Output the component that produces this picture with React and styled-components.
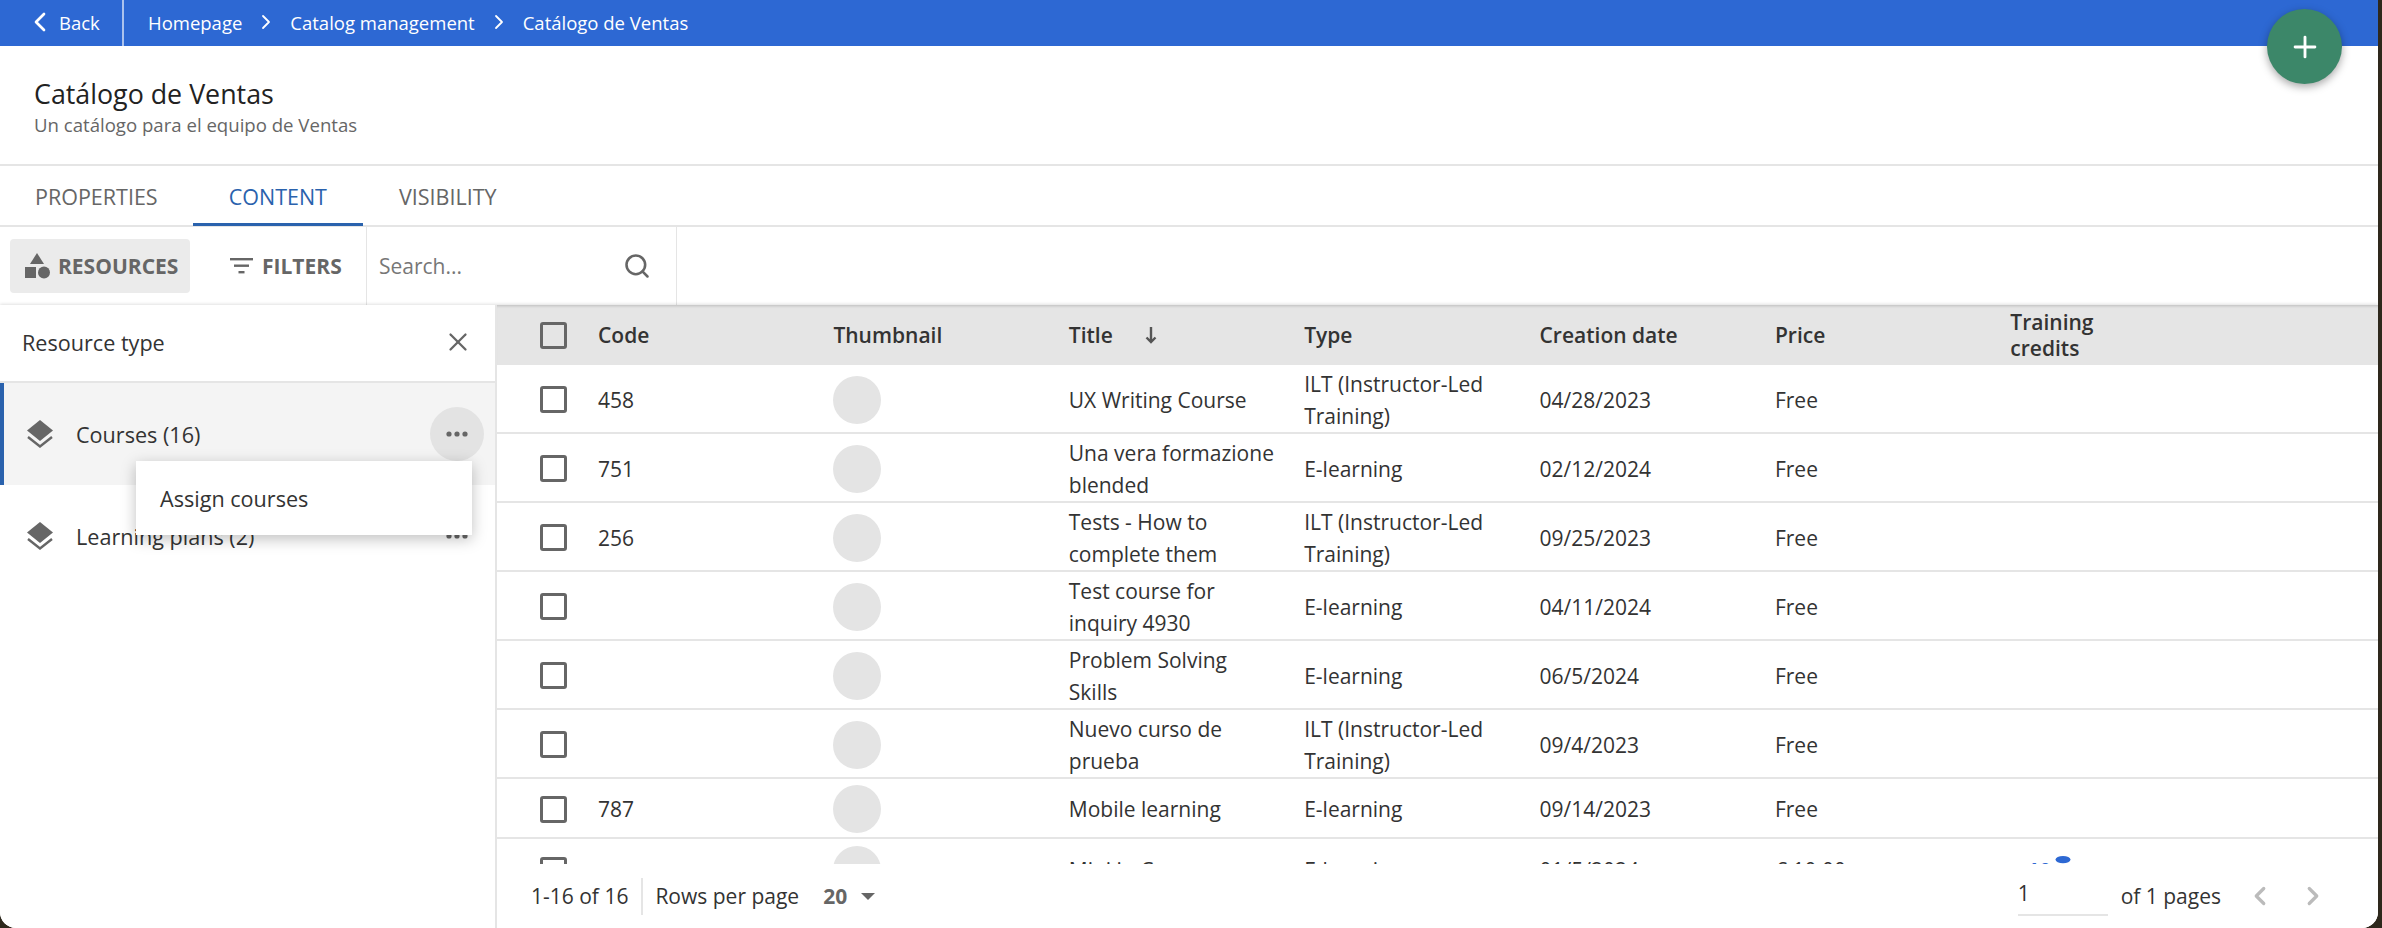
import React from "react";
import styled, { createGlobalStyle } from "styled-components";
import { ChevronLeft, ChevronRight, Search, X, Plus } from "lucide-react";

const Global = createGlobalStyle`
  html, body { margin: 0; padding: 0; height: 100%; background: #2e281c; overflow: hidden; }
  #root { height: 928px; }
  * { box-sizing: border-box; }
`;

const Page = styled.div`
  position: relative;
  width: 2378px;
  height: 928px;
  background: #fff;
  border-radius: 0 0 16px 16px;
  overflow: hidden;
  display: flex;
  flex-direction: column;
  font-family: "Open Sans", "Noto Sans", sans-serif;
  font-size: 21px;
  color: #333;
`;

const TopBar = styled.header`
  flex: none;
  height: 46px;
  background: #2d68d3;
  color: #fff;
  display: flex;
  align-items: center;
  font-size: 18.5px;
`;

const BackLink = styled.div`
  width: 124px;
  height: 100%;
  padding: 0 0 2px 24px;
  display: flex;
  align-items: center;
  gap: 3px;
  border-right: 2px solid rgba(255, 255, 255, 0.6);
`;

const Crumbs = styled.nav`
  display: flex;
  align-items: center;
  padding: 0 0 2px 24px;
`;

const CrumbSep = styled.span`
  width: 48px;
  display: flex;
  justify-content: center;
`;

const Fab = styled.button`
  position: absolute;
  left: 2267px;
  top: 9px;
  width: 75px;
  height: 75px;
  padding: 0;
  border: 0;
  border-radius: 50%;
  background: #3c8769;
  color: #fff;
  display: flex;
  align-items: center;
  justify-content: center;
  box-shadow: 0 3px 8px rgba(0, 0, 0, 0.35);
`;

const TitleBlock = styled.section`
  flex: none;
  height: 120px;
  padding: 31px 0 0 34px;
  border-bottom: 2px solid #e5e5e5;
`;

const PageTitle = styled.h1`
  margin: 0;
  font-size: 26.8px;
  line-height: 34px;
  font-weight: 500;
  color: #222;
`;

const Subtitle = styled.p`
  margin: 0;
  font-size: 18.6px;
  line-height: 27px;
  color: #666;
`;

const Tabs = styled.div`
  flex: none;
  height: 61px;
  display: flex;
  border-bottom: 2px solid #e5e5e5;
`;

const Tab = styled.div`
  height: 60px;
  padding: 3px ${(p) => p.$pad}px 0;
  display: flex;
  align-items: center;
  font-size: 21.5px;
  color: ${(p) => (p.$active ? "#2a62ad" : "#666")};
  border-bottom: 3px solid ${(p) => (p.$active ? "#2a62ad" : "transparent")};
`;

const Toolbar = styled.div`
  flex: none;
  height: 78px;
  display: flex;
  align-items: center;
`;

const ToolButton = styled.div`
  height: 54px;
  margin-left: ${(p) => p.$ml}px;
  width: ${(p) => p.$w}px;
  padding-left: ${(p) => p.$pl}px;
  display: flex;
  align-items: center;
  gap: ${(p) => p.$gap}px;
  border-radius: 4px;
  background: ${(p) => (p.$active ? "#ebebeb" : "transparent")};
  color: #666;
  font-weight: 700;
  font-size: 21px;
`;

const SearchBox = styled.div`
  height: 100%;
  width: 311px;
  margin-left: 12px;
  padding: 0 25px 0 12px;
  display: flex;
  align-items: center;
  justify-content: space-between;
  border-left: 1px solid #e5e5e5;
  border-right: 1px solid #e5e5e5;
  color: #777;
`;

const Body = styled.div`
  flex: 1;
  min-height: 0;
  display: flex;
  box-shadow: 0 -1px 3px rgba(0, 0, 0, 0.12);
`;

const Sidebar = styled.aside`
  flex: none;
  width: 497px;
  border-right: 2px solid #e5e5e5;
  position: relative;
  z-index: 2;
  background: #fff;
  font-size: 21.6px;
`;

const SideHead = styled.div`
  height: 78px;
  padding: 0 22px 2px;
  display: flex;
  align-items: center;
  justify-content: space-between;
  border-bottom: 2px solid #e5e5e5;
`;

const SideRow = styled.div`
  height: 102px;
  display: flex;
  align-items: center;
  padding-left: ${(p) => (p.$active ? 23 : 27)}px;
  padding-right: 11px;
  gap: 23px;
  background: ${(p) => (p.$active ? "#f4f4f4" : "transparent")};
  border-left: ${(p) => (p.$active ? "4px solid #2a62ad" : "0")};
`;

const RowLabel = styled.span`
  flex: 1;
`;

const DotsButton = styled.span`
  width: 54px;
  height: 54px;
  border-radius: 50%;
  display: flex;
  align-items: center;
  justify-content: center;
  background: ${(p) => (p.$active ? "#e3e3e3" : "transparent")};
`;

const PopMenu = styled.div`
  position: absolute;
  left: 136px;
  top: 156px;
  width: 336px;
  height: 74px;
  padding-left: 24px;
  display: flex;
  align-items: center;
  background: #fff;
  box-shadow: 0 4px 14px rgba(0, 0, 0, 0.25);
  z-index: 3;
`;

const TableArea = styled.main`
  flex: 1;
  min-width: 0;
  display: flex;
  flex-direction: column;
`;

const TableScroll = styled.div`
  flex: 1;
  min-height: 0;
  overflow: hidden;
`;

const Row = styled.div`
  height: ${(p) => p.$h}px;
  padding-top: ${(p) => (p.$head ? 0 : 2)}px;
  display: grid;
  grid-template-columns: 101px repeat(6, 235.4px) 1fr;
  align-items: center;
  background: ${(p) => (p.$head ? "#e5e5e5" : "#fff")};
  border-bottom: ${(p) => (p.$head ? "0" : "2px solid #e5e5e5")};
  box-shadow: ${(p) => (p.$head ? "inset 0 3px 3px -2px rgba(0,0,0,0.18)" : "none")};
  font-weight: ${(p) => (p.$head ? 600 : 400)};
  line-height: ${(p) => (p.$head ? 26 : 32)}px;
`;

const CheckCell = styled.div`
  padding-left: 43px;
  display: flex;
`;

const Check = styled.span`
  width: 27px;
  height: 27px;
  border: 3px solid #666;
  border-radius: 3px;
  background: transparent;
`;

const Cell = styled.div`
  max-width: ${(p) => p.$max || 210}px;
  display: flex;
  align-items: center;
  gap: ${(p) => p.$gap || 0}px;
`;

const Thumb = styled.span`
  width: 48px;
  height: 48px;
  border-radius: 50%;
  background: #e4e4e4;
`;

const CreditCell = styled.div`
  display: flex;
  align-items: center;
  gap: 4px;
  padding-left: 17px;
  color: #2d68d3;
  font-weight: 700;
`;

const CoinIcon = styled.svg`
  margin-top: -6px;
`;

const Footer = styled.footer`
  flex: none;
  height: 64px;
  padding: 0 50px 0 34px;
  display: flex;
  align-items: center;
  background: #fff;
`;

const FootCount = styled.span`
  padding-right: 13px;
  line-height: 37px;
  border-right: 2px solid #e5e5e5;
`;

const FootRows = styled.span`
  margin-left: 12px;
`;

const RowsValue = styled.span`
  margin-left: 24px;
  font-weight: 700;
  color: #666;
`;

const Caret = styled.span`
  margin-left: 14px;
  width: 0;
  height: 0;
  border-left: 7px solid transparent;
  border-right: 7px solid transparent;
  border-top: 7px solid #666;
`;

const Spacer = styled.span`
  flex: 1;
`;

const PageInput = styled.span`
  width: 90px;
  height: 40px;
  line-height: 34px;
  border-bottom: 2px solid #e5e5e5;
`;

const PageOf = styled.span`
  margin-left: 13px;
  margin-right: 24px;
`;

const Pager = styled.span`
  display: flex;
  gap: 23px;
  color: #bbb;
`;

const rows = [
  { h: 69, code: "458", title: "UX Writing Course", type: "ILT (Instructor-Led Training)", date: "04/28/2023", price: "Free" },
  { h: 69, code: "751", title: "Una vera formazione blended", type: "E-learning", date: "02/12/2024", price: "Free" },
  { h: 69, code: "256", title: "Tests - How to complete them", type: "ILT (Instructor-Led Training)", date: "09/25/2023", price: "Free" },
  { h: 69, code: "", title: "Test course for inquiry 4930", type: "E-learning", date: "04/11/2024", price: "Free" },
  { h: 69, code: "", title: "Problem Solving Skills", type: "E-learning", date: "06/5/2024", price: "Free" },
  { h: 69, code: "", title: "Nuevo curso de prueba", type: "ILT (Instructor-Led Training)", date: "09/4/2023", price: "Free" },
  { h: 60, code: "787", title: "Mobile learning", type: "E-learning", date: "09/14/2023", price: "Free" },
  { h: 62, code: "", title: "Mini in Corso", type: "E-learning", date: "01/5/2024", price: "€ 10.00", credits: "10" },
];

const Layers = () => (
  <svg width="26" height="28" viewBox="0 0 26 28" fill="none">
    <polygon points="13,0 26,10.5 13,21 0,10.5" fill="#666" />
    <polyline points="1,17 13,26.5 25,17" stroke="#666" strokeWidth="2.4" />
  </svg>
);

const Dots = () => (
  <svg width="22" height="6" viewBox="0 0 22 6" fill="#666">
    <circle cx="3" cy="3" r="2.6" />
    <circle cx="11" cy="3" r="2.6" />
    <circle cx="19" cy="3" r="2.6" />
  </svg>
);

const Shapes = () => (
  <svg width="25" height="26" viewBox="0 0 25 26" fill="#666">
    <polygon points="12,0 19,11 5,11" />
    <rect x="0" y="14" width="11" height="11" />
    <circle cx="19" cy="19.5" r="6" />
  </svg>
);

const FilterIcon = () => (
  <svg width="24" height="16" viewBox="0 0 24 16" fill="#666">
    <rect x="0" y="0" width="23" height="2.4" />
    <rect x="4" y="6.5" width="15" height="2.4" />
    <rect x="8.5" y="13" width="6" height="2.4" />
  </svg>
);

const SortDown = () => (
  <svg width="14" height="17" viewBox="0 0 14 17" fill="none" stroke="#555" strokeWidth="2.4">
    <path d="M7 0v15M2.500 10.500 7 15l4.500-4.500" />
  </svg>
);

const Coin = () => (
  <CoinIcon width="16" height="22" viewBox="0 0 16 22" fill="#2d68d3">
    <ellipse cx="8" cy="3.600" rx="7.500" ry="3.600" />
    <path d="M0.500 8.500c1 1.500 4 2.500 7.500 2.500s6.500-1 7.500-2.500v4c-1 1.500-4 2.500-7.500 2.500s-6.500-1-7.500-2.500z" />
  </CoinIcon>
);

export default function App() {
  return (
    <Page>
      <Global />
      <TopBar>
        <BackLink>
          <ChevronLeft size={32} strokeWidth={2} />
          <span>Back</span>
        </BackLink>
        <Crumbs>
          <span>Homepage</span>
          <CrumbSep><ChevronRight size={24} strokeWidth={1.8} /></CrumbSep>
          <span>Catalog management</span>
          <CrumbSep><ChevronRight size={24} strokeWidth={1.8} /></CrumbSep>
          <span>Catálogo de Ventas</span>
        </Crumbs>
      </TopBar>
      <Fab><Plus size={34} strokeWidth={2} /></Fab>

      <TitleBlock>
        <PageTitle>Catálogo de Ventas</PageTitle>
        <Subtitle>Un catálogo para el equipo de Ventas</Subtitle>
      </TitleBlock>

      <Tabs>
        <Tab $pad={35}>PROPERTIES</Tab>
        <Tab $pad={36} $active>CONTENT</Tab>
        <Tab $pad={36}>VISIBILITY</Tab>
      </Tabs>

      <Toolbar>
        <ToolButton $active $ml={10} $w={180} $pl={15} $gap={8}>
          <Shapes />
          <span>RESOURCES</span>
        </ToolButton>
        <ToolButton $ml={40} $w={124} $pl={0} $gap={8}>
          <FilterIcon />
          <span>FILTERS</span>
        </ToolButton>
        <SearchBox>
          <span>Search...</span>
          <Search size={28} color="#666" strokeWidth={2.2} />
        </SearchBox>
      </Toolbar>

      <Body>
        <Sidebar>
          <SideHead>
            <span>Resource type</span>
            <X size={30} color="#666" strokeWidth={1.8} />
          </SideHead>
          <SideRow $active>
            <Layers />
            <RowLabel>Courses (16)</RowLabel>
            <DotsButton $active><Dots /></DotsButton>
          </SideRow>
          <SideRow>
            <Layers />
            <RowLabel>Learning plans (2)</RowLabel>
            <DotsButton><Dots /></DotsButton>
          </SideRow>
          <PopMenu>Assign courses</PopMenu>
        </Sidebar>

        <TableArea>
          <TableScroll>
            <Row $head $h={60}>
              <CheckCell><Check /></CheckCell>
              <Cell>Code</Cell>
              <Cell>Thumbnail</Cell>
              <Cell $gap={31}>Title <SortDown /></Cell>
              <Cell>Type</Cell>
              <Cell>Creation date</Cell>
              <Cell>Price</Cell>
              <Cell $max={110}>Training credits</Cell>
            </Row>
            {rows.map((r, i) => (
              <Row key={i} $h={r.h}>
                <CheckCell><Check /></CheckCell>
                <Cell>{r.code}</Cell>
                <Cell><Thumb /></Cell>
                <Cell>{r.title}</Cell>
                <Cell>{r.type}</Cell>
                <Cell>{r.date}</Cell>
                <Cell>{r.price}</Cell>
                {r.credits ? <CreditCell>{r.credits}<Coin /></CreditCell> : <div />}
              </Row>
            ))}
          </TableScroll>
          <Footer>
            <FootCount>1-16 of 16</FootCount>
            <FootRows>Rows per page</FootRows>
            <RowsValue>20</RowsValue>
            <Caret />
            <Spacer />
            <PageInput>1</PageInput>
            <PageOf>of 1 pages</PageOf>
            <Pager>
              <ChevronLeft size={30} strokeWidth={2.6} />
              <ChevronRight size={30} strokeWidth={2.6} />
            </Pager>
          </Footer>
        </TableArea>
      </Body>
    </Page>
  );
}
